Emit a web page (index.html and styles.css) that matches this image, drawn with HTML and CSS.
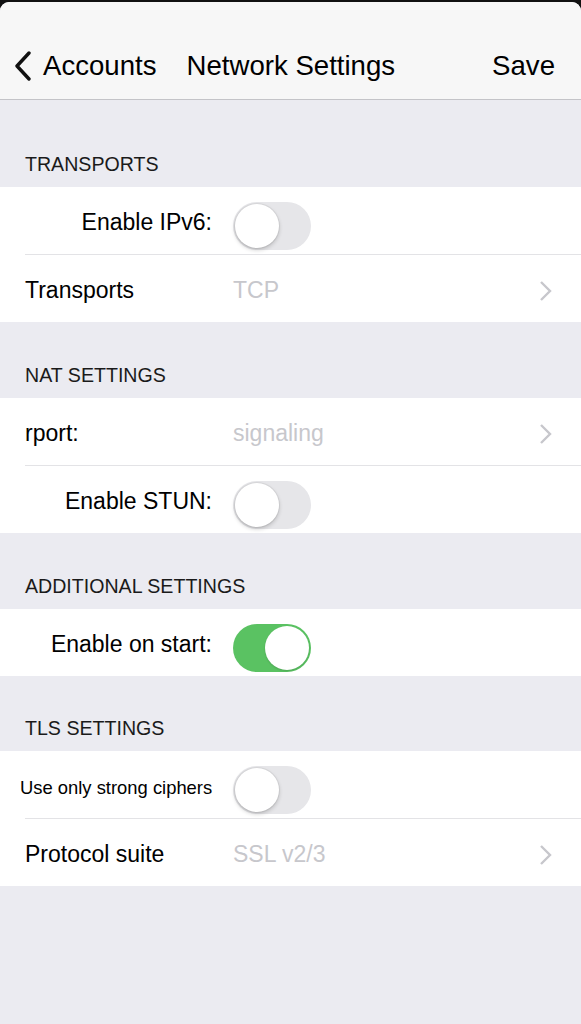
FILE: index.html
```html
<!DOCTYPE html>
<html lang="en">
<head>
  <meta charset="UTF-8" />
  <meta name="viewport" content="width=device-width, initial-scale=1.0" />
  <title>Network Settings</title>
  <link rel="stylesheet" href="styles.css">
</head>
<body>
  <div class="screen">
    <!-- Navigation bar -->
    <header class="navbar">
      <a class="nav-back" href="#">
        <svg class="back-icon" viewBox="0 0 20 30" width="20" height="30">
          <polyline points="16,2 4,15 16,28" fill="none" stroke="#111" stroke-width="3.4" stroke-linecap="round" stroke-linejoin="round" />
        </svg>
        <span>Accounts</span>
      </a>
      <span class="nav-title">Network Settings</span>
      <a class="nav-save" href="#">Save</a>
    </header>

    <!-- Transports -->
    <h4 class="group-title first">TRANSPORTS</h4>
    <div class="group">
      <div class="row">
        <span class="label right">Enable IPv6:</span>
        <span class="switch"><span class="knob"></span></span>
      </div>
      <div class="row">
        <span class="label">Transports</span>
        <span class="value">TCP</span>
        <svg class="chevron" viewBox="0 0 14 22" width="14" height="22">
          <polyline points="2,2 11,11 2,20" fill="none" stroke="#c7c7cc" stroke-width="2.4" />
        </svg>
      </div>
    </div>

    <!-- NAT -->
    <h4 class="group-title">NAT SETTINGS</h4>
    <div class="group">
      <div class="row">
        <span class="label">rport:</span>
        <span class="value">signaling</span>
        <svg class="chevron" viewBox="0 0 14 22" width="14" height="22">
          <polyline points="2,2 11,11 2,20" fill="none" stroke="#c7c7cc" stroke-width="2.4" />
        </svg>
      </div>
      <div class="row">
        <span class="label right">Enable STUN:</span>
        <span class="switch"><span class="knob"></span></span>
      </div>
    </div>

    <!-- Additional -->
    <h4 class="group-title">ADDITIONAL SETTINGS</h4>
    <div class="group">
      <div class="row">
        <span class="label right">Enable on start:</span>
        <span class="switch on"><span class="knob"></span></span>
      </div>
    </div>

    <!-- TLS -->
    <h4 class="group-title last">TLS SETTINGS</h4>
    <div class="group">
      <div class="row">
        <span class="label right small">Use only strong ciphers</span>
        <span class="switch"><span class="knob"></span></span>
      </div>
      <div class="row">
        <span class="label">Protocol suite</span>
        <span class="value">SSL v2/3</span>
        <svg class="chevron" viewBox="0 0 14 22" width="14" height="22">
          <polyline points="2,2 11,11 2,20" fill="none" stroke="#c7c7cc" stroke-width="2.4" />
        </svg>
      </div>
    </div>
  </div>
</body>
</html>
```

FILE: styles.css
```css
/* ------------------ Global Styles ------------------ */
body {
  margin: 0;
  background-color: #111;
  font-family: "Liberation Sans", Arial, sans-serif;
  color: #000;
}
.screen {
  min-height: 1022px;
  margin-top: 2px;
  background-color: #ebebf1;
  border-radius: 9px 9px 0 0;
  overflow: hidden;
}

/* ------------------ Nav bar ------------------ */
.navbar {
  height: 98px;
  display: flex;
  align-items: flex-end;
  padding: 0 26px 17px 13px;
  box-sizing: border-box;
  background-color: #f7f7f7;
  border-bottom: 1px solid #c4c4c8;
  font-size: 27.6px;
}
.navbar a {
  color: #000;
  text-decoration: none;
}
.nav-back {
  display: flex;
  align-items: center;
}
.back-icon {
  margin-right: 10px;
}
.nav-title {
  margin-left: 30px;
}
.nav-save {
  margin-left: auto;
}

/* ------------------ Groups ------------------ */
.group-title {
  margin: 0;
  padding: 47px 25px 16px;
  font-size: 19.6px;
  font-weight: normal;
  line-height: 13px;
  color: #1a1a1a;
}
.group-title.first {
  padding-top: 58px;
}
.group-title.last {
  padding-top: 46px;
}
.group {
  background: #fff;
}
.row {
  height: 67px;
  padding-top: 4px;
  box-sizing: border-box;
  display: flex;
  align-items: center;
  font-size: 23px;
}
.row + .row {
  height: 68px;
  border-top: 1px solid #e3e3e6;
  margin-left: 25px;
}
.label {
  width: 187px;
  padding-left: 25px;
  flex-shrink: 0;
  white-space: nowrap;
}
.row + .row .label {
  padding-left: 0;
}
.label.right {
  text-align: right;
}
.label.small {
  width: 192px;
  padding: 2px 0 0 20px;
  font-size: 18.4px;
}
.value {
  margin-left: 21px;
  color: #c7c7cc;
  flex: 1;
}
.chevron {
  margin-right: 28px;
}

/* ------------------ Switch ------------------ */
.switch {
  position: relative;
  width: 78px;
  height: 48px;
  margin: 6px 0 0 21px;
  border-radius: 24px;
  background: #e6e6e9;
  box-sizing: border-box;
}
.knob {
  position: absolute;
  top: 2px;
  left: 2px;
  width: 44px;
  height: 44px;
  border-radius: 50%;
  background: #fff;
  box-shadow: 0 2px 4px rgba(0,0,0,0.2), 0 0 0 1px rgba(0,0,0,0.05);
}
.switch.on {
  background: #5ac262;
}
.switch.on .knob {
  left: 32px;
  box-shadow: 0 1px 2px rgba(0,0,0,0.15);
}
```
